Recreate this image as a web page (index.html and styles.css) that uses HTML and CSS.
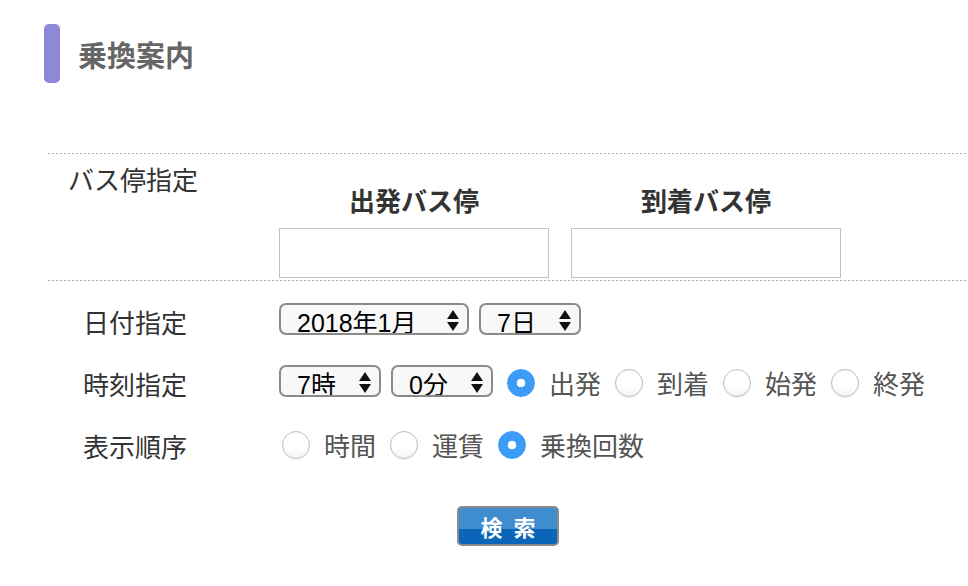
FILE: index.html
```html
<!DOCTYPE html>
<html lang="ja">
<head>
<meta charset="utf-8">
<title>乗換案内</title>
<link rel="stylesheet" href="styles.css">
</head>
<body>
<div class="page">
  <header class="title">
    <span class="title-bar"></span>
    <h1 class="title-text">乗換案内</h1>
  </header>

  <form class="form">
    <div class="stop-row">
      <div class="label label-stop">バス停指定</div>
      <div class="stops">
        <div class="stop">
          <div class="stop-head">出発バス停</div>
          <input class="stop-input" type="text">
        </div>
        <div class="stop">
          <div class="stop-head">到着バス停</div>
          <input class="stop-input" type="text">
        </div>
      </div>
    </div>

    <div class="rows">
      <div class="row">
        <div class="label">日付指定</div>
        <div class="controls">
          <div class="select select-wide"><span class="select-text">2018年1月</span><svg class="arrows" viewBox="0 0 12 21" width="12" height="21"><path d="M0 9 L6 0 L12 9 Z M0 12 L12 12 L6 21 Z"/></svg></div>
          <div class="select"><span class="select-text">7日</span><svg class="arrows" viewBox="0 0 12 21" width="12" height="21"><path d="M0 9 L6 0 L12 9 Z M0 12 L12 12 L6 21 Z"/></svg></div>
        </div>
      </div>

      <div class="row">
        <div class="label">時刻指定</div>
        <div class="controls">
          <div class="select"><span class="select-text">7時</span><svg class="arrows" viewBox="0 0 12 21" width="12" height="21"><path d="M0 9 L6 0 L12 9 Z M0 12 L12 12 L6 21 Z"/></svg></div>
          <div class="select"><span class="select-text">0分</span><svg class="arrows" viewBox="0 0 12 21" width="12" height="21"><path d="M0 9 L6 0 L12 9 Z M0 12 L12 12 L6 21 Z"/></svg></div>
          <div class="choices choices-time">
            <label class="opt"><input type="radio" name="dir" checked><span>出発</span></label>
            <label class="opt"><input type="radio" name="dir"><span>到着</span></label>
            <label class="opt"><input type="radio" name="dir"><span>始発</span></label>
            <label class="opt"><input type="radio" name="dir"><span>終発</span></label>
          </div>
        </div>
      </div>

      <div class="row">
        <div class="label">表示順序</div>
        <div class="controls">
          <div class="choices">
            <label class="opt"><input type="radio" name="order"><span>時間</span></label>
            <label class="opt"><input type="radio" name="order"><span>運賃</span></label>
            <label class="opt"><input type="radio" name="order" checked><span>乗換回数</span></label>
          </div>
        </div>
      </div>
    </div>

    <div class="actions">
      <button class="search" type="button">検索</button>
    </div>
  </form>
</div>
</body>
</html>
```

FILE: styles.css
```css
* { box-sizing: border-box; }

html, body {
  margin: 0;
  padding: 0;
  background: #fff;
}

body {
  font-family: "Noto Sans CJK JP", "Noto Sans", sans-serif;
  color: #333;
}

.page {
  width: 968px;
  padding-top: 24px;
}

.title {
  display: flex;
  align-items: center;
  gap: 18px;
  margin-left: 44px;
  margin-bottom: 70px;
}

.title-bar {
  width: 16px;
  height: 59px;
  border-radius: 5px;
  background: #8c8ad8;
}

.title-text {
  margin: 0;
  font-size: 29px;
  line-height: 36px;
  font-weight: 700;
  color: #666;
}

.form {
  margin-left: 48px;
}

.stop-row {
  display: flex;
  height: 128px;
  padding-bottom: 3px;
  background-image:
    linear-gradient(to right, #b0b0b0 50%, transparent 50%),
    linear-gradient(to right, #b0b0b0 50%, transparent 50%);
  background-size: 4px 1px, 4px 1px;
  background-repeat: repeat-x, repeat-x;
  background-position: left top, left bottom;
}

.label {
  width: 231px;
  padding-left: 35px;
  font-size: 26px;
  line-height: 32px;
  color: #333;
}

.label-stop {
  padding-left: 20px;
  padding-top: 10px;
}

.stops {
  display: flex;
  gap: 22px;
  padding-top: 31px;
}

.stop {
  display: flex;
  flex-direction: column;
  align-items: center;
  width: 270px;
}

.stop-head {
  font-size: 26px;
  line-height: 32px;
  font-weight: 700;
  color: #333;
  margin-bottom: 12px;
}

.stop-input {
  width: 270px;
  height: 50px;
  margin: 0;
  border: 1px solid #c2c2c2;
  background: #fff;
}

.rows {
  padding-top: 9px;
}

.row {
  display: flex;
  align-items: center;
  height: 62px;
}

.row .label {
  position: relative;
  top: 1px;
}

.controls {
  display: flex;
  align-items: center;
  gap: 10px;
}

.select {
  position: relative;
  top: -2px;
  display: flex;
  align-items: flex-start;
  justify-content: space-between;
  width: 102px;
  height: 32px;
  padding: 6px 8px 0 16px;
  border: 2px solid #8a8a8a;
  border-radius: 7px;
  background: #f8f8f8;
  overflow: hidden;
}

.select-wide {
  width: 190px;
}

.select-text {
  font-family: "Liberation Sans", "Noto Sans CJK JP", sans-serif;
  font-size: 25px;
  line-height: 25px;
  color: #000;
  white-space: nowrap;
}

.arrows {
  flex: none;
  margin-top: -1px;
  fill: #111;
}

.choices {
  display: flex;
  align-items: center;
  gap: 11px;
}

.choices-time {
  margin-left: 1px;
}

.opt {
  display: flex;
  align-items: center;
  gap: 14px;
  font-size: 26px;
  line-height: 32px;
  color: #555;
}

.opt input {
  -webkit-appearance: none;
  appearance: none;
  width: 28px;
  height: 28px;
  margin: 0 0 0 3px;
  border: 1px solid #bdbdbd;
  border-radius: 50%;
  background: linear-gradient(#ffffff 60%, #f3f3f3);
  box-shadow: 0 1px 1px rgba(0, 0, 0, 0.06);
}

.opt input:checked {
  border-color: #3d9bf8;
  background: radial-gradient(circle, #fff 0 4px, #3d9bf8 4.6px);
  box-shadow: none;
}

.actions {
  display: flex;
  justify-content: center;
  padding-top: 30px;
}

.search {
  width: 102px;
  height: 40px;
  margin: 0;
  padding: 0 0 0 11px;
  border: 2px solid #8a8a8a;
  border-radius: 5px;
  background: linear-gradient(#3f8ccf 0, #3f8ccf 58%, #0b66b9 58%, #0b66b9 100%);
  color: #fff;
  font-family: "Noto Sans CJK JP", sans-serif;
  font-size: 22px;
  font-weight: 700;
  letter-spacing: 11px;
  line-height: 36px;
}
```
